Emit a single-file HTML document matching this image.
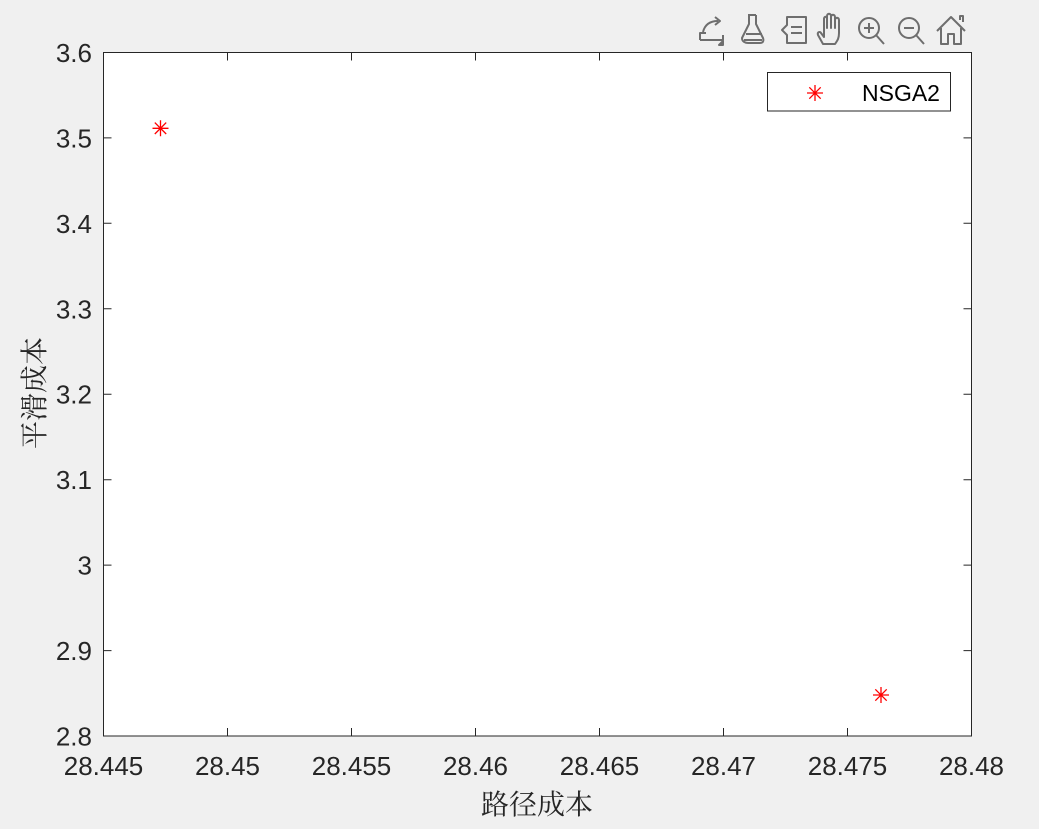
<!DOCTYPE html>
<html><head><meta charset="utf-8"><style>
html,body{margin:0;padding:0;background:#f0f0f0;}
svg{display:block;}
text{font-family:"Liberation Sans",Arial,sans-serif;fill:#262626;}
</style></head><body>
<svg width="1039" height="829" viewBox="0 0 1039 829" xmlns="http://www.w3.org/2000/svg">
<rect x="0" y="0" width="1039" height="829" fill="#f0f0f0"/>
<rect x="103.5" y="52.5" width="868" height="683.5" fill="#fff" stroke="#262626" stroke-width="1"/>
<g stroke="#262626" stroke-width="1">
<path d="M227.5 736v-8M351.5 736v-8M475.5 736v-8M599.5 736v-8M723.5 736v-8M847.5 736v-8
M227.5 52.5v8M351.5 52.5v8M475.5 52.5v8M599.5 52.5v8M723.5 52.5v8M847.5 52.5v8"/>
<path d="M103.5 137.9h8M103.5 223.3h8M103.5 308.8h8M103.5 394.2h8M103.5 479.7h8M103.5 565.1h8M103.5 650.6h8
M971.5 137.9h-8M971.5 223.3h-8M971.5 308.8h-8M971.5 394.2h-8M971.5 479.7h-8M971.5 565.1h-8M971.5 650.6h-8"/>
</g>
<g font-size="26" text-anchor="end">
<text x="92" y="62">3.6</text>
<text x="92" y="147.4">3.5</text>
<text x="92" y="232.8">3.4</text>
<text x="92" y="318.3">3.3</text>
<text x="92" y="403.7">3.2</text>
<text x="92" y="489.2">3.1</text>
<text x="92" y="574.6">3</text>
<text x="92" y="660.1">2.9</text>
<text x="92" y="745.5">2.8</text>
</g>
<g font-size="26" text-anchor="middle">
<text x="103.5" y="775">28.445</text>
<text x="227.5" y="775">28.45</text>
<text x="351.5" y="775">28.455</text>
<text x="475.5" y="775">28.46</text>
<text x="599.5" y="775">28.465</text>
<text x="723.5" y="775">28.47</text>
<text x="847.5" y="775">28.475</text>
<text x="971.5" y="775">28.48</text>
</g>
<text x="537" y="814" font-size="28" text-anchor="middle" style="font-family:'Noto Serif CJK SC','Liberation Serif',serif">路径成本</text>
<text transform="translate(44,393) rotate(-90)" font-size="28" text-anchor="middle" style="font-family:'Noto Serif CJK SC','Liberation Serif',serif">平滑成本</text>
<rect x="767.5" y="72.5" width="183" height="38.5" fill="#fff" stroke="#262626" stroke-width="1"/>
<text x="862" y="101" font-size="23" style="fill:#000">NSGA2</text>
<g stroke="#ff0000" stroke-width="1.3" fill="none">
<g transform="translate(815,93)"><path d="M0 -8V8M-8 0H8M-5.7 -5.7L5.7 5.7M-5.7 5.7L5.7 -5.7"/></g>
<g transform="translate(160.5,128.3)"><path d="M0 -8V8M-8 0H8M-5.7 -5.7L5.7 5.7M-5.7 5.7L5.7 -5.7"/></g>
<g transform="translate(881,695)"><path d="M0 -8V8M-8 0H8M-5.7 -5.7L5.7 5.7M-5.7 5.7L5.7 -5.7"/></g>
</g>
<g stroke="#6e6e6e" stroke-width="2" fill="none" stroke-linejoin="round">
<path d="M700 40V33h6M700 40h23v-5"/>
<path d="M703 32c2-8 8-11 15-11"/><path d="M715 17l5 4-5 4"/>
<path d="M719 45l4-4v4z" fill="#6e6e6e"/>
<path d="M748 15h8M749 15v9l-7 14c0 4 4 5 6 5h12c3 0 4-2 3-5l-7-14v-9"/>
<path d="M746 34h16M744 40h18"/>
<path d="M787 17h19v26h-19v-8l-5-5 5-5z"/><path d="M791 27h11M791 33h11"/>
<path d="M823 44l-5-9c-1-3 2-4 3-2l3 4V19c0-3 3-3 3 0v9V16c0-3 4-3 4 0v12V17c0-3 4-3 4 0v11V20c0-3 4-3 4 0v13c0 6-2 8-4 11z"/>
<circle cx="869" cy="28" r="10"/><path d="M876 35l8 9M864 28h10M869 23v10"/>
<circle cx="909" cy="28" r="10"/><path d="M916 35l8 9M904 28h10"/>
<path d="M937 31l14-14 14 14M941 28v16h7v-10h6v10h7v-16M960 20v-4h3v6"/>
</g>
</svg>
</body></html>
